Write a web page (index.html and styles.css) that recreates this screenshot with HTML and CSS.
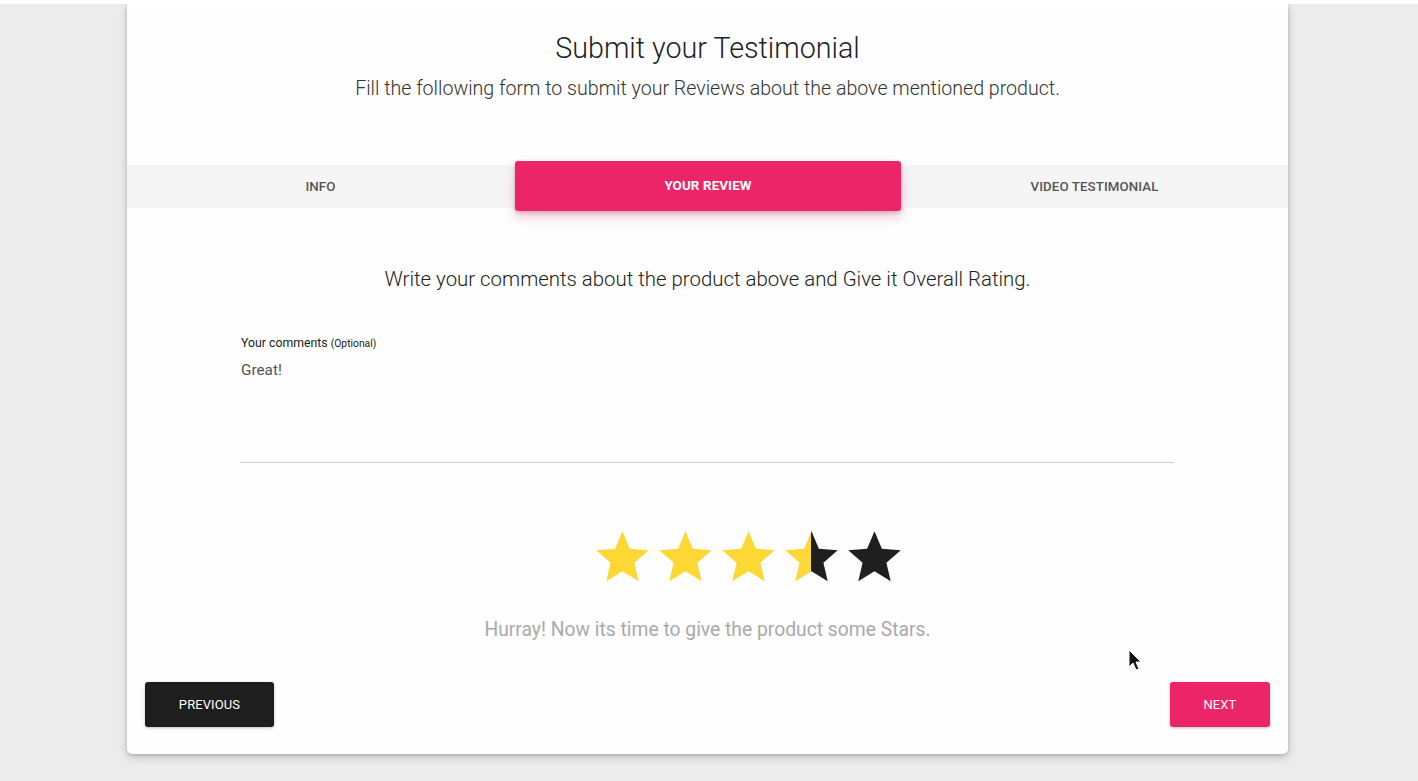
FILE: index.html
```html
<!DOCTYPE html>
<html>
<head>
<meta charset="utf-8">
<link rel="stylesheet" href="styles.css">
</head>
<body>
<div class="card">
  <header class="head">
    <h1 class="title">Submit your Testimonial</h1>
    <p class="subtitle">Fill the following form to submit your Reviews about the above mentioned product.</p>
  </header>
  <nav class="tabs">
    <div class="tab">INFO</div>
    <div class="tab active">YOUR REVIEW</div>
    <div class="tab">VIDEO TESTIMONIAL</div>
  </nav>
  <section class="review">
    <h2 class="prompt">Write your comments about the product above and Give it Overall Rating.</h2>
    <div class="field">
      <label class="label">Your comments <small>(Optional)</small></label>
      <div class="textarea">Great!</div>
    </div>
    <div class="stars">
      <svg class="star" viewBox="0 0 24 24"><path fill="#fdd835" d="M12 17.27L18.18 21l-1.64-7.03L22 9.24l-7.19-.61L12 2 9.19 8.63 2 9.24l5.46 4.73L5.82 21z"/></svg>
      <svg class="star" viewBox="0 0 24 24"><path fill="#fdd835" d="M12 17.27L18.18 21l-1.64-7.03L22 9.24l-7.19-.61L12 2 9.19 8.63 2 9.24l5.46 4.73L5.82 21z"/></svg>
      <svg class="star" viewBox="0 0 24 24"><path fill="#fdd835" d="M12 17.27L18.18 21l-1.64-7.03L22 9.24l-7.19-.61L12 2 9.19 8.63 2 9.24l5.46 4.73L5.82 21z"/></svg>
      <svg class="star" viewBox="0 0 24 24"><defs><linearGradient id="half" x1="0" x2="1" y1="0" y2="0"><stop offset="50%" stop-color="#fdd835"/><stop offset="50%" stop-color="#1f1f1f"/></linearGradient></defs><path fill="url(#half)" d="M12 17.27L18.18 21l-1.64-7.03L22 9.24l-7.19-.61L12 2 9.19 8.63 2 9.24l5.46 4.73L5.82 21z"/></svg>
      <svg class="star" viewBox="0 0 24 24"><path fill="#1f1f1f" d="M12 17.27L18.18 21l-1.64-7.03L22 9.24l-7.19-.61L12 2 9.19 8.63 2 9.24l5.46 4.73L5.82 21z"/></svg>
    </div>
    <p class="hint">Hurray! Now its time to give the product some Stars.</p>
  </section>
  <footer class="actions">
    <button class="btn btn-dark">PREVIOUS</button>
    <button class="btn btn-pink">NEXT</button>
  </footer>
</div>
<svg class="cursor" width="16" height="24" viewBox="0 0 16 24"><path d="M1 1 L1 18 L5 14 L8 21 L11 20 L8 13 L13 13 Z" fill="#111" stroke="#fff" stroke-width="1"/></svg>
</body>
</html>
```
FILE: styles.css
```css
* { box-sizing: border-box; }
html, body { margin: 0; padding: 0; }
body {
  background: #ececec;
  border-top: 4px solid #ffffff;
  font-family: Roboto, "Liberation Sans", sans-serif;
  height: 781px;
  overflow: hidden;
  position: relative;
}
.card {
  width: 1161px;
  margin-left: 127px;
  background: #fefefe;
  border-radius: 0 0 5px 5px;
  box-shadow: 0 3px 8px rgba(0,0,0,0.22), 0 1px 3px rgba(0,0,0,0.12);
  padding-bottom: 27px;
}
.head {
  text-align: center;
  padding-top: 24px;
  height: 161px;
}
.title {
  margin: 0;
  font-size: 28.7px;
  line-height: 40px;
  font-weight: 300;
  color: #222;
}
.subtitle {
  margin: 8px 0 0;
  font-size: 19.6px;
  line-height: 26px;
  font-weight: 300;
  color: #333;
}
.tabs {
  display: grid;
  grid-template-columns: 1fr 1fr 1fr;
  height: 43px;
  background: #f5f5f5;
  align-items: start;
}
.tab {
  height: 43px;
  display: flex;
  align-items: center;
  justify-content: center;
  font-size: 13.3px;
  font-weight: 500;
  color: #555;
  letter-spacing: 0.1px;
}
.tab.active {
  margin-top: -4px;
  height: 50px;
  background: #eb2567;
  color: #fff;
  font-weight: 700;
  font-size: 13.4px;
  border-radius: 3px;
  box-shadow: 0 6px 12px rgba(233, 30, 99, 0.25), 0 2px 4px rgba(0,0,0,0.18);
  margin-left: 1px;
  padding-bottom: 2px;
}
.review { text-align: center; }
.prompt {
  margin: 57px 0 0;
  font-size: 20.4px;
  line-height: 28px;
  font-weight: 300;
  color: #222;
}
.field {
  text-align: left;
  margin: 42px 114px 0 113px;
}
.label {
  display: block;
  font-size: 12.3px;
  line-height: 16px;
  color: #222;
  padding-left: 1px;
}
.label small { font-size: 10.3px; }
.textarea {
  margin-top: 8px;
  height: 103px;
  font-size: 15.3px;
  line-height: 20px;
  color: #555;
  padding-left: 1px;
  border-bottom: 1px solid #d0d0d0;
}
.stars {
  display: flex;
  justify-content: center;
  padding-left: 81px;
  margin-top: 63px;
  height: 63px;
}
.star { width: 63px; height: 63px; display: block; }
.hint {
  margin: 29px 0 0;
  font-size: 19.3px;
  line-height: 24px;
  font-weight: 400;
  color: #aaa;
}
.actions {
  display: flex;
  justify-content: space-between;
  padding: 0 18px;
  margin-top: 40px;
}
.btn {
  height: 45px;
  border: none;
  border-radius: 3px;
  font-family: Roboto, "Liberation Sans", sans-serif;
  font-size: 13px;
  color: #fff;
  letter-spacing: 0.1px;
  box-shadow: 0 1px 3px rgba(0,0,0,0.25);
}
.btn-dark { width: 129px; background: #1e1e1e; }
.btn-pink { width: 100px; background: #eb2567; }
.cursor {
  position: absolute;
  left: 1128px;
  top: 645px;
}
```
